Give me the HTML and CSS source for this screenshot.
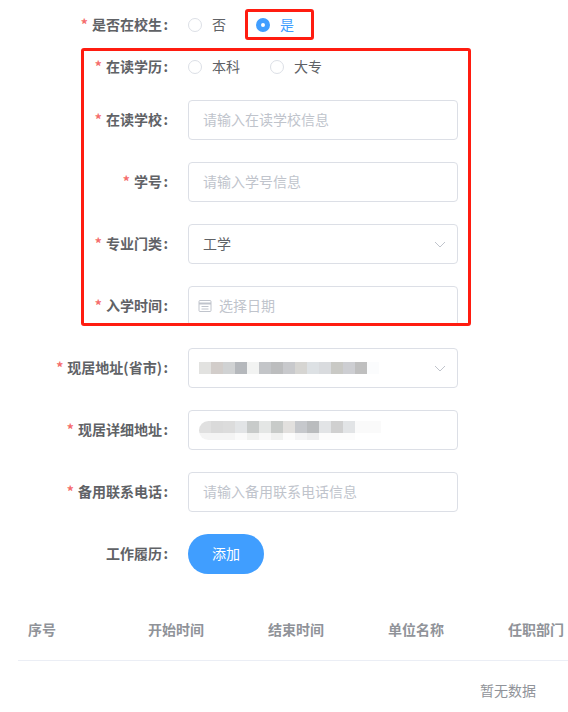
FILE: index.html
```html
<!DOCTYPE html>
<html lang="zh-CN">
<head>
<meta charset="UTF-8" />
<meta name="viewport" content="width=device-width, initial-scale=1" />
<title>个人信息</title>
<link rel="stylesheet" href="styles.css">
</head>
<body>
<form class="form">
  <div class="form-item form-item-radio first">
    <label class="form-label required">是否在校生<span class="colon">:</span></label>
    <div class="radio-group">
      <span class="radio"><i class="radio-dot"></i>否</span>
      <span class="radio checked"><i class="radio-dot"></i>是</span>
    </div>
  </div>

  <div class="form-item form-item-radio second">
    <label class="form-label required">在读学历<span class="colon">:</span></label>
    <div class="radio-group">
      <span class="radio"><i class="radio-dot"></i>本科</span>
      <span class="radio"><i class="radio-dot"></i>大专</span>
    </div>
  </div>

  <div class="form-item">
    <label class="form-label required">在读学校<span class="colon">:</span></label>
    <input class="input" type="text" placeholder="请输入在读学校信息">
  </div>

  <div class="form-item">
    <label class="form-label required">学号<span class="colon">:</span></label>
    <input class="input" type="text" placeholder="请输入学号信息">
  </div>

  <div class="form-item">
    <label class="form-label required">专业门类<span class="colon">:</span></label>
    <div class="input select">
      <span>工学</span>
      <svg class="arrow" width="12" height="7" viewBox="0 0 12 7"><path d="M1 1l5 5 5-5" fill="none" stroke="#c0c4cc" stroke-width="1"/></svg>
    </div>
  </div>

  <div class="form-item">
    <label class="form-label required">入学时间<span class="colon">:</span></label>
    <div class="input date">
      <svg class="calendar" width="14" height="14" viewBox="0 0 14 14" fill="none" stroke="#c0c4cc"><rect x="1" y="1.5" width="12" height="11" rx="1"/><path d="M1 4.5h12" stroke-width="2"/><path d="M3.5 7.5h7M3.5 10h7"/></svg>
      <span class="placeholder">选择日期</span>
    </div>
  </div>

  <div class="form-item">
    <label class="form-label required">现居地址(省市)<span class="colon">:</span></label>
    <div class="input select">
      <span class="blur blur-city"></span>
      <svg class="arrow" width="12" height="7" viewBox="0 0 12 7"><path d="M1 1l5 5 5-5" fill="none" stroke="#c0c4cc" stroke-width="1"/></svg>
    </div>
  </div>

  <div class="form-item">
    <label class="form-label required">现居详细地址<span class="colon">:</span></label>
    <div class="input select">
      <span class="blur blur-street"></span>
    </div>
  </div>

  <div class="form-item">
    <label class="form-label required">备用联系电话<span class="colon">:</span></label>
    <input class="input" type="text" placeholder="请输入备用联系电话信息">
  </div>

  <div class="form-item">
    <label class="form-label">工作履历<span class="colon">:</span></label>
    <button class="btn-add" type="button">添加</button>
  </div>
</form>

<div class="table">
  <div class="table-head">
    <div class="cell">序号</div>
    <div class="cell">开始时间</div>
    <div class="cell">结束时间</div>
    <div class="cell">单位名称</div>
    <div class="cell">任职部门</div>
  </div>
  <div class="table-empty">暂无数据</div>
</div>

<!-- 标注框 -->
<div class="mark mark-radio"></div>
<div class="mark mark-school"></div>
</body>
</html>
```

FILE: styles.css
```css
* {
  margin: 0;
  padding: 0;
  box-sizing: border-box;
}

html, body {
  height: 100%;
  overflow: hidden;
}

body {
  position: relative;
  background: #fff;
  color: #606266;
  font-family: "Noto Sans CJK SC", "Liberation Sans", sans-serif;
  font-size: 14px;
  padding-top: 5px;
}

.form-item {
  display: flex;
  align-items: center;
  height: 40px;
  margin-bottom: 22px;
}

.form-item-radio.first {
  margin-bottom: 2px;
}

.form-item-radio.second {
  margin-bottom: 13px;
}

.form-label {
  width: 188px;
  padding: 0 20px 2px 0;
  text-align: right;
  font-weight: 700;
  white-space: nowrap;
}

.form-label.required::before {
  content: "*";
  color: #f56c6c;
  margin-right: 4px;
}

.colon {
  margin-left: 1.5px;
}

/* 单选 */
.radio-group {
  display: flex;
}

.radio {
  display: flex;
  align-items: center;
  margin-right: 30px;
  padding-bottom: 2px;
}

.radio-dot {
  width: 14px;
  height: 14px;
  margin: 2px 10px 0 0;
  border: 1px solid #dcdfe6;
  border-radius: 50%;
  background: #fff;
}

.radio.checked {
  color: #409eff;
}

.radio.checked .radio-dot {
  border: 5px solid #409eff;
}

/* 输入框 */
.input {
  display: flex;
  align-items: center;
  width: 270px;
  height: 40px;
  padding: 0 15px 2px 14px;
  border: 1px solid #dcdfe6;
  border-radius: 4px;
  background: #fff;
  color: #606266;
  font: inherit;
  outline: none;
}

.input::placeholder,
.placeholder {
  color: #c0c4cc;
}

.select {
  justify-content: space-between;
  padding: 0 11px 0 14px;
}

.select > span:first-child:not(.blur) {
  padding-bottom: 2px;
}

.select .arrow {
  flex: none;
}

.select .blur {
  margin-left: -4px;
}

.date {
  padding: 0 15px 0 9px;
}

.date .placeholder {
  padding-bottom: 2px;
}

.calendar {
  margin-right: 7px;
}

/* 打码区域 */
.blur {
  display: block;
  height: 12px;
}

.blur-city {
  width: 180px;
  background: linear-gradient(90deg,
    #e2e2e0 0 12px, #d2cdca 12px 24px, #d0d2d3 24px 36px, #b5b8bc 36px 48px,
    #f2f3f2 48px 60px, #c3c5c8 60px 72px, #bcbdbe 72px 84px, #c8c9cc 84px 96px,
    #d6d5d2 96px 108px, #dde1e4 108px 120px, #d9dbde 120px 132px, #c9c9c5 132px 144px,
    #cdced2 144px 156px, #bfbfbf 156px 168px, #fbfcfd 168px 180px);
}

.blur-street {
  width: 182px;
  height: 19px;
  border-radius: 10px 0 0 10px;
  background:
    linear-gradient(90deg,
      #e0e0e0 0 12px, #dadada 12px 24px, #dcdcdc 24px 36px, #e2e4e6 36px 48px,
      #c8cbca 48px 60px, #e4e6e5 60px 72px, #c8cbc9 72px 84px, #e2e0de 84px 96px,
      #c6c8cc 96px 108px, #babcbe 108px 120px, #e2e4e6 120px 132px, #d0d0d0 132px 144px,
      #e2e4e6 144px 156px, #fafafa 156px 182px) top / 100% 12px no-repeat,
    linear-gradient(90deg,
      #f4f4f4 0 36px, #fafafa 36px 48px, #f0f1f0 48px 60px, #f8f8f8 60px 72px,
      #f0f1f0 72px 84px, #fcfcfc 84px 96px, #f4f4f5 96px 108px, #eeeeef 108px 120px,
      #fcfcfc 120px 156px, #fff 156px) bottom / 100% 7px no-repeat;
}

/* 按钮 */
.btn-add {
  width: 76px;
  height: 40px;
  padding-bottom: 2px;
  border: none;
  border-radius: 20px;
  background: #409eff;
  color: #fff;
  font: inherit;
}

/* 表格 */
.table {
  width: 980px;
  margin: 26px 0 0 18px;
}

.table-head {
  display: flex;
  align-items: center;
  height: 61px;
  padding-bottom: 2px;
  border-bottom: 1px solid #ebeef5;
  color: #909399;
  font-weight: 700;
}

.cell {
  width: 120px;
  padding: 0 10px;
  white-space: nowrap;
}

.table-empty {
  height: 60px;
  line-height: 58px;
  text-align: center;
  color: #909399;
}

/* 红色标注框 */
.mark {
  position: absolute;
  border: 3px solid #ff1c10;
  border-radius: 3px;
}

.mark-radio {
  left: 245px;
  top: 9px;
  width: 69px;
  height: 31px;
}

.mark-school {
  left: 81px;
  top: 48px;
  width: 390px;
  height: 278px;
}
```
